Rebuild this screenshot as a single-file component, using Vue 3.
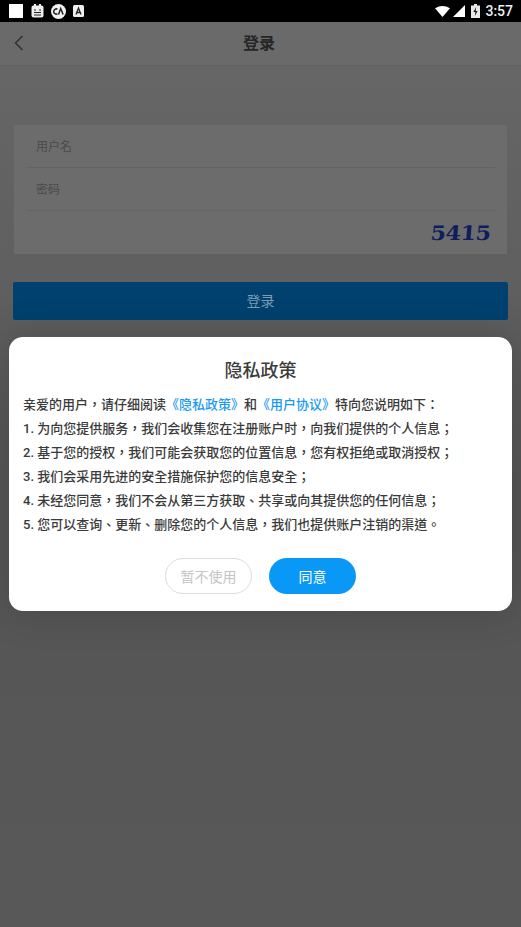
<template>
  <div class="page">
    <div class="status-bar">
      <div class="status-left">
        <span class="white-square"></span>
        <svg class="note-icon" width="13" height="14" viewBox="0 0 13 14">
          <rect x="0.5" y="1.5" width="12" height="12" rx="2" fill="#eee" />
          <rect x="3" y="0" width="2" height="3" fill="#eee" />
          <rect x="8" y="0" width="2" height="3" fill="#eee" />
          <path d="M3 6h2M8 6h2M3 8.5h7M3 11h7" stroke="#222" stroke-width="1.1" />
        </svg>
        <svg class="round-icon" width="15" height="15" viewBox="0 0 15 15">
          <circle cx="7.5" cy="7.5" r="7.5" fill="#f2f2f2" />
          <path d="M6.5 5.2a2.6 2.6 0 1 0 0 4.6M7.5 10.5l2.2-6 2.4 6" fill="none" stroke="#222" stroke-width="1.5" />
        </svg>
        <svg class="a-icon" width="11" height="12" viewBox="0 0 11 12">
          <rect width="11" height="12" rx="1.5" fill="#eee" />
          <path d="M3 9.5L5.5 3 8 9.5M3.8 7.5h3.4" fill="none" stroke="#222" stroke-width="1.3" />
        </svg>
      </div>
      <div class="status-right">
        <svg width="15" height="11" viewBox="0 0 17 12" preserveAspectRatio="none"><path d="M0 2.5Q8.5-2.5 17 2.5L8.5 12Z" fill="#fff" /></svg>
        <svg width="12" height="12" viewBox="0 0 13 13"><path d="M13 0V13H0Z" fill="#fff" /></svg>
        <svg class="battery" width="9" height="14" viewBox="0 0 9 14">
          <path d="M3 0h3v1.5h3V14H0V1.5h3Z" fill="#e8e8e8" />
          <path d="M5.2 3L2.4 8h2L3.8 12l2.8-5h-2Z" fill="#111" />
        </svg>
        <span class="clock">3:57</span>
      </div>
    </div>

    <div class="nav-bar">
      <svg class="back" width="10" height="16" viewBox="0 0 10 16">
        <path d="M8.5 1L1.5 8l7 7" fill="none" stroke="#2f2f2f" stroke-width="1.4" />
      </svg>
      <span class="nav-title">登录</span>
    </div>

    <div class="login-body">
      <div class="form-card">
        <div class="form-row">用户名</div>
        <div class="form-row">密码</div>
        <div class="form-row captcha-row">
          <span class="captcha">5415</span>
        </div>
      </div>
      <div class="login-btn">登录</div>
    </div>

    <div class="mask">
      <div class="dialog">
        <div class="dialog-title">隐私政策</div>
        <div class="dialog-text">
          <p>亲爱的用户，请仔细阅读<a>《隐私政策》</a>和<a>《用户协议》</a>特向您说明如下：</p>
          <p v-for="line in lines" :key="line">{{ line }}</p>
        </div>
        <div class="dialog-actions">
          <button class="btn-later">暂不使用</button>
          <button class="btn-agree">同意</button>
        </div>
      </div>
    </div>
  </div>
</template>

<script setup>
const lines = [
  '1. 为向您提供服务，我们会收集您在注册账户时，向我们提供的个人信息；',
  '2. 基于您的授权，我们可能会获取您的位置信息，您有权拒绝或取消授权；',
  '3. 我们会采用先进的安全措施保护您的信息安全；',
  '4. 未经您同意，我们不会从第三方获取、共享或向其提供您的任何信息；',
  '5. 您可以查询、更新、删除您的个人信息，我们也提供账户注销的渠道。'
];
</script>

<style>
html,
body {
  margin: 0;
  background: #5a5a5a;
}
</style>

<style scoped>
.page {
  position: relative;
  width: 521px;
  height: 927px;
  overflow: hidden;
  display: flex;
  flex-direction: column;
  font-family: Roboto, "Noto Sans CJK TC", sans-serif;
  background: #666;
}

.status-bar {
  height: 22px;
  flex: none;
  background: #000;
  display: flex;
  justify-content: space-between;
  align-items: center;
  padding: 0 8px 0 9px;
}

.status-left,
.status-right {
  display: flex;
  align-items: center;
}

.white-square {
  width: 14px;
  height: 14px;
  background: #fff;
}

.note-icon {
  margin-left: 8px;
}

.round-icon {
  margin-left: 7px;
}

.a-icon {
  margin-left: 7px;
}

.status-right svg {
  margin-right: 3px;
}

.status-right .battery {
  margin-left: 3px;
  margin-right: 5px;
}

.clock {
  color: #eee;
  font-size: 14px;
  font-weight: 500;
}

.nav-bar {
  height: 43px;
  flex: none;
  background: #6a6a6a;
  display: flex;
  align-items: center;
  justify-content: center;
  position: relative;
  box-shadow: 0 1px 1px rgba(0, 0, 0, 0.04);
}

.back {
  position: absolute;
  left: 14px;
  top: 13px;
}

.nav-title {
  font-size: 16px;
  font-weight: 700;
  color: #262626;
  margin: -4px 3px 0 0;
}

.login-body {
  flex: 1;
  padding: 60px 13px 0;
  background: linear-gradient(#666 0, #5f5f5f 220px, #555 420px, #585858 100%);
}

.form-card {
  margin: 0 1px;
  height: 129px;
  background: #6c6c6c;
  padding: 0 12px;
  box-sizing: border-box;
}

.form-row {
  height: 43px;
  line-height: 44px;
  padding-left: 10px;
  font-size: 12px;
  color: #4a4a4a;
  border-bottom: 1px solid #646464;
  box-sizing: border-box;
}

.captcha-row {
  border-bottom: none;
  display: flex;
  justify-content: flex-end;
  align-items: center;
  padding-right: 4px;
}

.captcha {
  font-family: "DejaVu Serif", serif;
  font-weight: 700;
  font-size: 20px;
  color: #101d5c;
  letter-spacing: -0.5px;
  line-height: 1;
  transform: scaleX(1.12) skewX(-4deg);
  transform-origin: right center;
}

.login-btn {
  height: 38px;
  margin-top: 28px;
  background: #00416f;
  border-radius: 2px;
  color: #7e9db4;
  font-size: 14px;
  line-height: 38px;
  text-align: center;
}

.mask {
  position: absolute;
  left: 0;
  right: 0;
  top: 21px;
  bottom: 0;
  display: flex;
  align-items: center;
  justify-content: center;
}

.dialog {
  width: 503px;
  height: 274px;
  box-sizing: border-box;
  background: #fff;
  border-radius: 14px;
  padding: 21px 14px 0;
  box-shadow: 0 0 40px rgba(0, 0, 0, 0.18);
}

.dialog-title {
  font-size: 18px;
  line-height: 26px;
  font-weight: 500;
  text-align: center;
  color: #3c3c3c;
}

.dialog-text {
  margin-top: 9px;
  font-size: 13px;
  line-height: 24px;
  font-weight: 500;
  color: #3a3a3a;
}

.dialog-text p {
  margin: 0;
  white-space: nowrap;
}

.dialog-text a {
  color: #1a9bf0;
}

.dialog-actions {
  display: flex;
  justify-content: center;
  gap: 17px;
  margin-top: 21px;
}

.dialog-actions button {
  width: 87px;
  height: 36px;
  border-radius: 18px;
  font-family: inherit;
  font-size: 14px;
  padding: 0;
  box-sizing: border-box;
}

.btn-later {
  background: #fff;
  border: 1px solid #dcdcdc;
  color: #c4c4c4;
}

.btn-agree {
  background: #0a98f7;
  border: none;
  color: #fff;
}
</style>
